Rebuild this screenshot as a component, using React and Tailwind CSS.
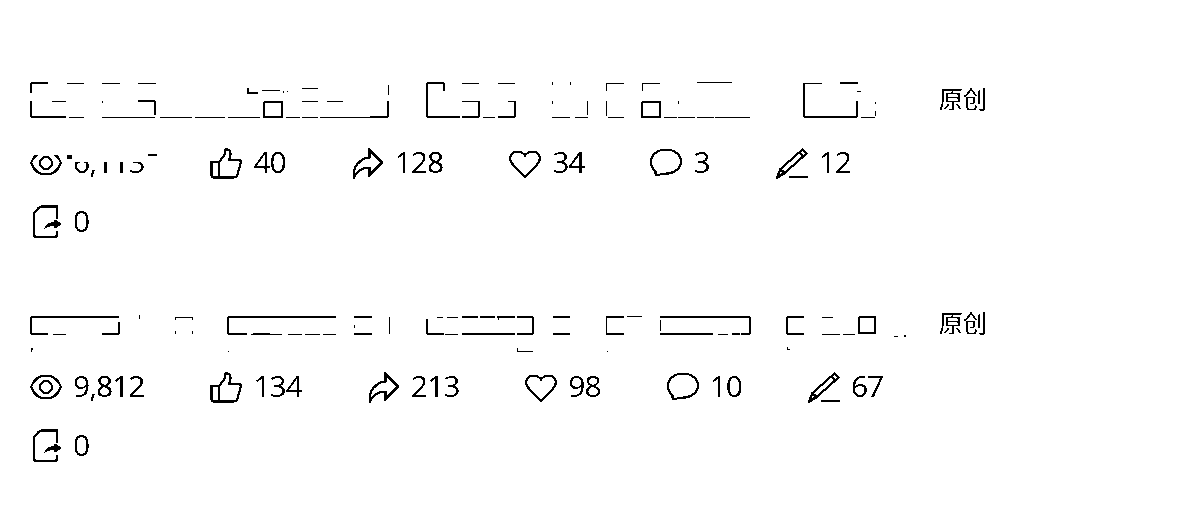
import React from "react";

const font = { fontFamily: '"Open Sans", "Noto Sans CJK SC", sans-serif' };

const Eye = () => (
  <svg width="32" height="32" viewBox="0 0 32 32" fill="none" stroke="black" strokeWidth="2.2">
    <path d="M1 16C4 8.5 9.5 4.5 16 4.5S28 8.5 31 16C28 23.5 22.5 27.5 16 27.5S4 23.5 1 16Z" />
    <circle cx="16" cy="16" r="6" />
  </svg>
);
const Thumb = () => (
  <svg width="32" height="32" viewBox="0 0 32 32" fill="none" stroke="black" strokeWidth="2.2">
    <path d="M1.5 15H9V30.5H3.5Q1.5 30.5 1.5 28.5Z" />
    <path d="M9 15L14 9Q15.5 6 15.5 2.5Q20.5 1.5 20.5 7.5L19 13H28.5Q31.5 13 30.5 16.5L27.5 27.5Q26.8 30.5 24 30.5H9" />
  </svg>
);
const Share = () => (
  <svg width="32" height="32" viewBox="0 0 32 32" fill="none" stroke="black" strokeWidth="2.2">
    <path d="M17.5 3L30 15.5L17.5 28V21Q7 20 2 30.5Q0.5 20 8 14.5Q12 10.5 17.5 10.5Z" />
  </svg>
);
const Heart = () => (
  <svg width="32" height="32" viewBox="0 0 32 32" fill="none" stroke="black" strokeWidth="2.2">
    <path d="M16 30L3.5 17C-1.5 11 2.5 4.5 8.5 4.5Q13 4.5 16 8.5Q19 4.5 23.5 4.5C29.5 4.5 33.5 11 28.5 17Z" />
  </svg>
);
const Comment = () => (
  <svg width="32" height="32" viewBox="0 0 32 32" fill="none" stroke="black" strokeWidth="2.2">
    <path d="M16 2.5C24 2.5 31 7.5 31 14.5S24 26.5 16 26.5Q12 26.5 8.5 28Q5 29.5 5.5 24.5Q1 20.5 1 14.5C1 7.5 8 2.5 16 2.5Z" />
  </svg>
);
const Pen = () => (
  <svg width="32" height="32" viewBox="0 0 32 32" fill="none" stroke="black" strokeWidth="2.2">
    <path d="M26.5 2.5L30.5 6.5L8.5 26L4.5 22Z" />
    <path d="M4.5 22L1 30.5L8.5 26" />
    <path d="M23.5 5.5L27.5 9.5" />
    <path d="M1 30.5L5 27.5" strokeWidth="3" />
    <path d="M13 30H32" strokeWidth="2.8" />
  </svg>
);
const Reprint = () => (
  <svg width="32" height="32" viewBox="0 0 32 32" fill="none" className="overflow-visible">
    <path d="M27 13V0.5H12Q10 0.5 8.5 2L5 6Q4 7 4 9V28.5Q4 31 6.5 31H24.5Q27 31 27 28.5V25" stroke="black" strokeWidth="2.4" />
    <path d="M14 23.5Q15.5 16.5 24.5 15.5V13L32 18L24.5 23V20Q18 20 14 23.5Z" fill="black" />
  </svg>
);

const Stat = ({ icon, value }) => (
  <div className="flex items-center gap-[11px]">
    {icon}
    <span className="pb-0.5 text-[30px] leading-[38px] tracking-[-1px] text-black">{value}</span>
  </div>
);

const Fragments = ({ thin, thick }) => (
  <svg width="880" height="36" viewBox="0 0 880 36" className="block overflow-visible" shapeRendering="crispEdges" fill="none" stroke="black">
    <path d={thin} strokeWidth="1" />
    <path d={thick} strokeWidth="2.5" />
  </svg>
);

const Article = ({ stats, thin, thick, overlay }) => (
  <div className="flex flex-col">
    <div className="flex h-9 items-start">
      <div className="w-[909px]">
        <Fragments thin={thin} thick={thick} />
      </div>
      <span className="mt-px text-2xl leading-8 text-black">原创</span>
    </div>
    <div className="relative mt-[25px] flex items-center gap-[66px]">
      {stats.map((s, i) => (
        <Stat key={i} icon={s[0]} value={s[1]} />
      ))}
      {overlay}
    </div>
    <div className="mt-[19px]">
      <Stat icon={<Reprint />} value="0" />
    </div>
  </div>
);

const t1Thin =
  "M37 1H54M72 1H90M108 1H126M22 19H36M72 19V21M108 19H125M39 35.5H54M72 35.5H125M130 35.5H162M165 35.5H195M198 35.5H230M256 35.5H270M272 6.5H288M272 19H288M272 35.5H288M290 35.5H357M358 3V13M232 8.5H250M253 9V11M257 9V10M297 19H313" +
  "M432 1H449M432 19H449M453 35.5H465M468 1H485M478 19H485M522 35.5H540M545 35.5H558M557 19V33M522 0V3M540 0V3M522 19V22M576 1H594M576 1V9M576 19V34M578 35.5H594M612 1H630M612 1V9M634 35.5H647M648 35.5H665M667 35.5H684M685 35.5H720M667 0.5H702M648 19V22M774 1H792M831 35.5H845M845 20V22M845 29V34M827 9H831";
const t1Thick =
  "M1 1H18M1 1V11M1 19V35M1 35H36M108 19H125M125 19V33M218 6V11H228M234 20H252V35H234V20M358 19V35M340 35H358M397 1H414M397 1V35M397 35H430M414 1V9M449 19V35M432 35H449M485 19V35M468 35H485M612 20H630V35H612V20M774 1V35M774 35H827M810 1H828M827 19V35";

const t2Thin =
  "M23 28H36M145 11H162M145 11V14M162 11V14M145 28V25M162 28V25M109 9V13M221 28H235M239 28H252M258 28H272M275 28H290M293 28H306M324 19V22M359 11V28M1 43V46M198 45V46" +
  "M407 11H413M417 11H428M415 28H428M468 11V14M576 11V28M597 10H612M670 28H683M688 28H698M792 11H803M792 28H810M813 28H825M864 30H868M487 42V46M487 45.5H503M577 45V46M757 41V43H760M630 14V25M720 11V14";
const t2Thick =
  "M1 11H89M1 11V28M1 28H18M72 28H89M89 16V28M198 11H306M198 11V28M198 28H217M223 28H240M324 11H342M324 28H342M397 13V26Q397 28 399 28H414M432 11H448M450 11H465M467 11H485M487 11H503M432 28H485M487 28H503M503 11V28M523 11H540M523 28H540M576 11H594M576 28H594M630 11H720M630 28H683M702 28H710M711 28H720M720 11V28M757 11V28M757 11H774M757 28H774M829 11H845V27H829V11M874 30H876M1 43H3";

export default function App() {
  const row1 = [
    [<Eye />, "6,113"],
    [<Thumb />, "40"],
    [<Share />, "128"],
    [<Heart />, "34"],
    [<Comment />, "3"],
    [<Pen />, "12"],
  ];
  const row2 = [
    [<Eye />, "9,812"],
    [<Thumb />, "134"],
    [<Share />, "213"],
    [<Heart />, "98"],
    [<Comment />, "10"],
    [<Pen />, "67"],
  ];
  const overlay = (
    <>
      <div className="absolute left-0 top-0 h-3 w-[44px] bg-white" />
      <div className="absolute left-[44px] top-0 h-[19px] w-[74px] bg-white" />
      <div className="absolute left-[37px] top-3 h-1 w-[5px] bg-black" />
      <div className="absolute left-[118px] top-[11px] h-0.5 w-[9px] bg-black" />
    </>
  );
  return (
    <div className="min-h-[510px] w-[1194px] overflow-hidden bg-white pl-[30px] pt-[82px] [filter:url(#bw)]" style={font}>
      <svg width="0" height="0" className="absolute">
        <filter id="bw" colorInterpolationFilters="sRGB">
          <feComponentTransfer>
            <feFuncR type="discrete" tableValues="0 1" />
            <feFuncG type="discrete" tableValues="0 1" />
            <feFuncB type="discrete" tableValues="0 1" />
          </feComponentTransfer>
        </filter>
      </svg>
      <Article stats={row1} thin={t1Thin} thick={t1Thick} overlay={overlay} />
      <div className="h-16" />
      <Article stats={row2} thin={t2Thin} thick={t2Thick} />
    </div>
  );
}
